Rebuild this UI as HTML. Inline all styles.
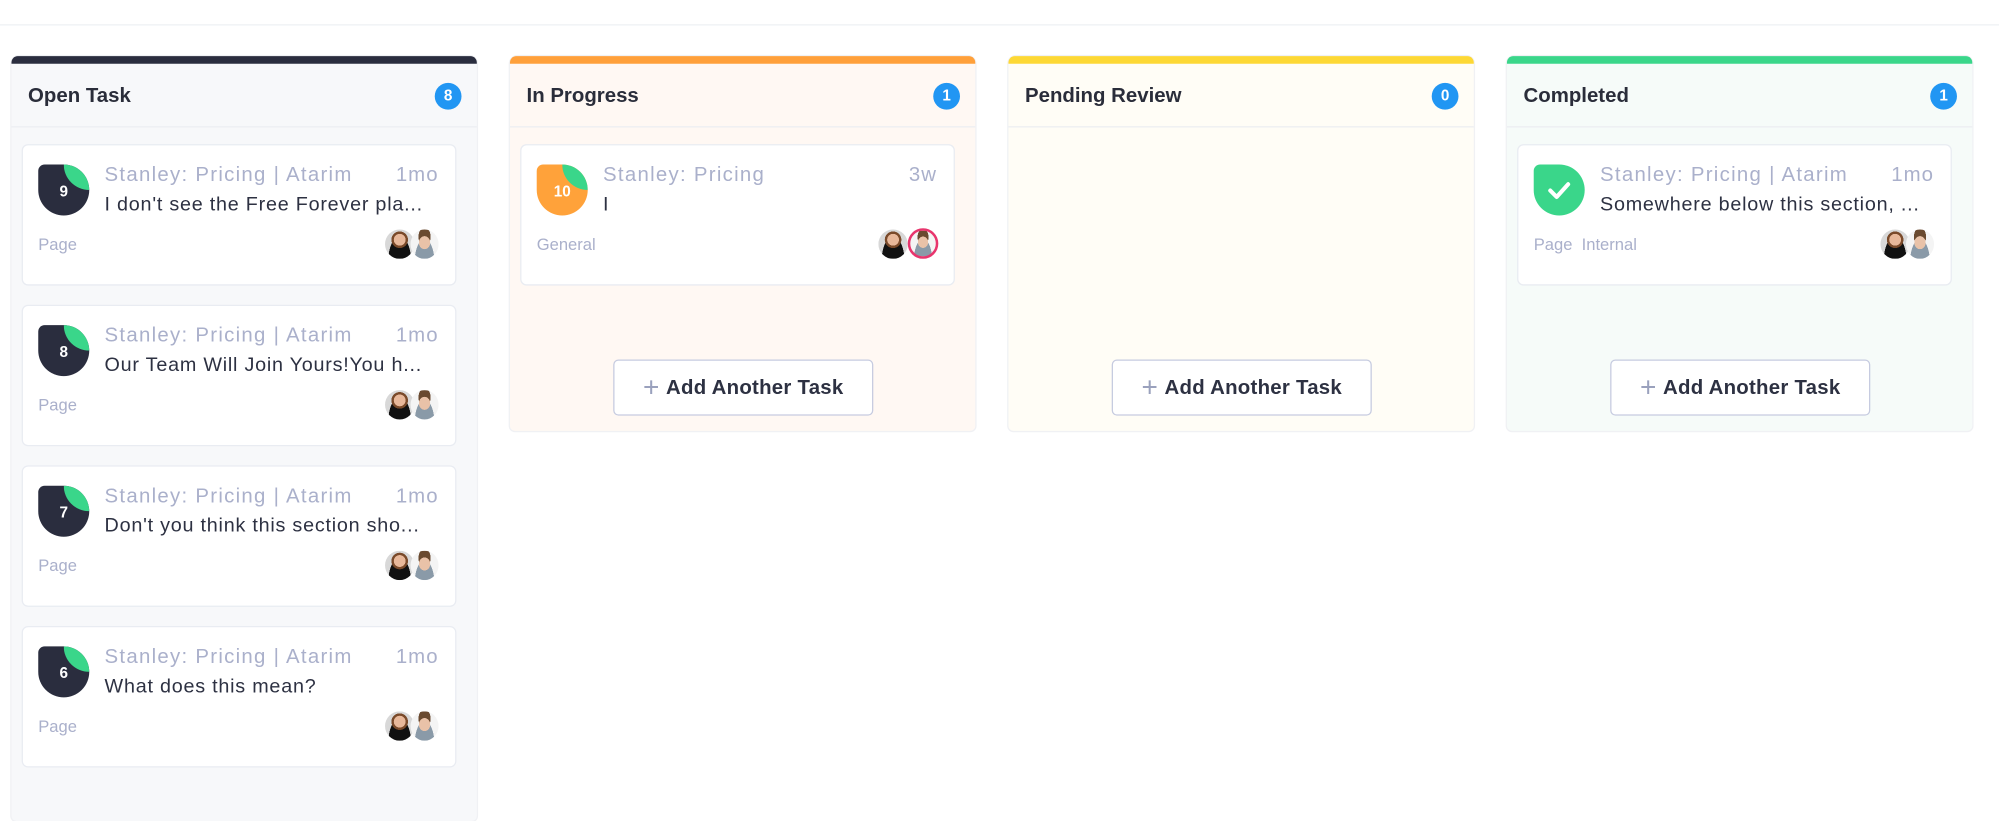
<!DOCTYPE html>
<html><head><meta charset="utf-8"><style>
html,body{margin:0;padding:0;background:#fff;width:1999px;height:782px;overflow:hidden;font-family:"Liberation Sans",sans-serif}
#w{position:absolute;left:0;top:0;width:1568px;height:614px;transform:scale(1.2749);transform-origin:0 0}
.topline{position:absolute;left:0;top:19px;width:1568px;height:1px;background:#eef0f4}
.col{position:absolute;top:44px;width:365px;border-radius:6px 6px 4px 4px;box-shadow:0 0 0 1px #f0f1f4}
.bar{height:6px;border-radius:5px 5px 0 0}
.hd{height:49px;border-bottom:1px solid #eceef2;position:relative}
.hd .t{position:absolute;left:13px;top:17px;font-size:16px;font-weight:bold;color:#2a2d3a}
.hd .b{position:absolute;right:12px;top:15px;width:21px;height:21px;border-radius:50%;background:#2196f3;color:#fff;font-size:12px;font-weight:bold;text-align:center;line-height:21px}
.card{position:absolute;left:8px;width:339px;height:109px;background:#fff;border:1px solid #e9ecf2;border-radius:5px}
.ic{position:absolute;left:12px;top:15px;width:40px;height:40px;border-radius:5px 50% 50% 50%;overflow:hidden;background:#2a2d3e;color:#fff;font-size:12px;font-weight:bold;text-align:center;line-height:42px}
.ic i{position:absolute;right:-20px;top:-20px;width:40px;height:40px;border-radius:50%;background:#3ad68a;clip-path:polygon(0 50%,50% 50%,50% 100%,0 100%)}
.ic span{position:relative}
.tt{position:absolute;left:64px;top:15px;font-size:16px;color:#aab0cb;letter-spacing:1px}
.tm{position:absolute;right:13px;top:15px;font-size:16px;color:#aab0cb;letter-spacing:.8px}
.ds{position:absolute;left:64px;top:38px;font-size:15.5px;color:#2d3142;letter-spacing:.6px}
.tg{position:absolute;left:12px;top:70px;font-size:13px;color:#aab0cb}
.av{position:absolute;top:66px;width:23px;height:23px;border-radius:50%;overflow:hidden;background:#ddd}
.av.a1{right:32px;background:radial-gradient(circle at 50% 35%,#e8b89a 0 24%,#7a4a2a 25% 34%,transparent 35%),radial-gradient(ellipse at 50% 110%,#111 0 55%,transparent 56%),#d8d8d8}
.av.a2{right:13px;width:22px;background:radial-gradient(ellipse at 50% 45%,#e9c2a8 0 28%,transparent 29%),radial-gradient(ellipse at 50% 25%,#6a4a30 0 30%,transparent 31%),radial-gradient(ellipse at 50% 115%,#8a9aa8 0 50%,transparent 51%),#f4f4f4}
.btn{position:absolute;left:81px;top:238px;width:202px;height:42px;border:1px solid #c6cbe0;border-radius:4px;background:#fff;text-align:center;line-height:42px;font-size:16px;font-weight:bold;color:#2d3142;letter-spacing:.2px}
.btn b{color:#9aa1bd;font-size:22px;font-weight:400;vertical-align:-2px;margin-right:5px}
</style></head><body><div id="w">
<div class="topline"></div>

<div class="col" style="left:9px;height:600px;background:#f7f8fa">
<div class="bar" style="background:#2a2d3e"></div>
<div class="hd"><div class="t">Open Task</div><div class="b">8</div></div>
<div class="card" style="top:69px"><div class="ic"><i></i><span>9</span></div><div class="tt">Stanley: Pricing | Atarim</div><div class="tm">1mo</div><div class="ds">I don't see the Free Forever pla...</div><div class="tg">Page</div><div class="av a1"></div><div class="av a2"></div></div>
<div class="card" style="top:195px"><div class="ic"><i></i><span>8</span></div><div class="tt">Stanley: Pricing | Atarim</div><div class="tm">1mo</div><div class="ds">Our Team Will Join Yours!You h...</div><div class="tg">Page</div><div class="av a1"></div><div class="av a2"></div></div>
<div class="card" style="top:321px"><div class="ic"><i></i><span>7</span></div><div class="tt">Stanley: Pricing | Atarim</div><div class="tm">1mo</div><div class="ds">Don't you think this section sho...</div><div class="tg">Page</div><div class="av a1"></div><div class="av a2"></div></div>
<div class="card" style="top:447px"><div class="ic"><i></i><span>6</span></div><div class="tt">Stanley: Pricing | Atarim</div><div class="tm">1mo</div><div class="ds">What does this mean?</div><div class="tg">Page</div><div class="av a1"></div><div class="av a2"></div></div>
</div>

<div class="col" style="left:400px;height:294px;background:#fff8f3">
<div class="bar" style="background:#ffa03a"></div>
<div class="hd"><div class="t">In Progress</div><div class="b">1</div></div>
<div class="card" style="top:69px"><div class="ic" style="background:#ffa23a"><i></i><span>10</span></div><div class="tt">Stanley: Pricing</div><div class="tm">3w</div><div class="ds">I</div><div class="tg">General</div><div class="av a1" style="right:36px"></div><div class="av a2" style="right:12px;top:65px;width:24px;height:24px;box-sizing:border-box;border:2px solid #e8356d"></div></div>
<div class="btn"><b>+</b>Add Another Task</div>
</div>

<div class="col" style="left:791px;height:294px;background:#fffdf6">
<div class="bar" style="background:#fdd835"></div>
<div class="hd"><div class="t">Pending Review</div><div class="b">0</div></div>
<div class="btn"><b>+</b>Add Another Task</div>
</div>

<div class="col" style="left:1182px;height:294px;background:#f6fbf9">
<div class="bar" style="background:#3ad68a"></div>
<div class="hd"><div class="t">Completed</div><div class="b">1</div></div>
<div class="card" style="top:69px"><div class="ic" style="background:#3ad68a"><svg width="40" height="40" viewBox="0 0 40 40" style="position:absolute;left:0;top:0"><path d="M13 20.5l5 5 9-10" stroke="#fff" stroke-width="3.2" fill="none" stroke-linecap="round" stroke-linejoin="round"/></svg></div><div class="tt">Stanley: Pricing | Atarim</div><div class="tm">1mo</div><div class="ds">Somewhere below this section, ...</div><div class="tg">Page&nbsp; Internal</div><div class="av a1"></div><div class="av a2"></div></div>
<div class="btn"><b>+</b>Add Another Task</div>
</div>

</div></body></html>
